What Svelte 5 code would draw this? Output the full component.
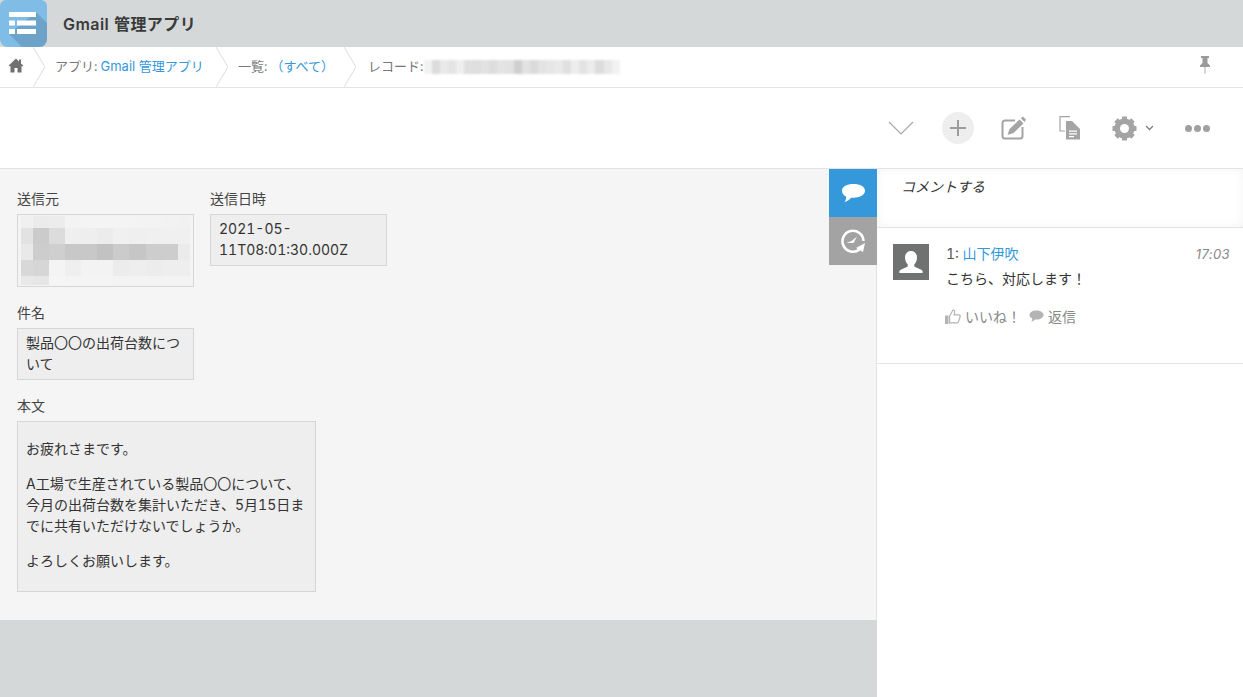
<script lang="ts">
  // pixelated (redacted) areas from the record
  const senderColumns = '12px 16px 16px 16px 16px 16px 16px 17px 16px 16px 12px';
  const senderMosaic = [
    ['f0f0f0', 'ebebeb', 'ececec', 'f3f3f3', 'f4f4f4', 'f4f4f4', 'f4f4f4', 'f3f3f3', 'f3f3f3', 'f2f2f2', 'f1f1f1'],
    ['e2e2e2', 'cbcbcb', 'dcdcdc', 'efefef', 'eeeeee', 'ececec', 'f0f0f0', 'efefef', 'f0f0f0', 'f0f0f0', 'f0f0f0'],
    ['e9e9e9', 'cdcdcd', 'cfcfcf', 'c8c8c8', 'c8c8c8', 'c2c2c2', 'cbcbcb', 'c6c6c6', 'cdcdcd', 'cdcdcd', 'ebebeb'],
    ['d8d8d8', 'd6d6d6', 'f4f4f4', 'efefef', 'f3f3f3', 'f3f3f3', 'ececec', 'eeeeee', 'ececec', 'eeeeee', 'eeeeee'],
    ['e8e8e8', 'e6e6e6', 'f5f5f5', 'f4f4f4', 'f4f4f4', 'f4f4f4', 'f3f3f3', 'f3f3f3', 'f3f3f3', 'f3f3f3', 'f3f3f3']
  ];
  const recordMosaic = [
    'f2f2f2', 'dcdcdc', 'e9e9e9', 'e4e4e4', 'efefef', 'dfdfdf', 'dedede', 'e2e2e2', 'dddddd', 'e4e4e4',
    'e2e2e2', 'cfcfcf', 'e2e2e2', 'dadada', 'e3e3e3', 'e6e6e6', 'e9e9e9', 'e0e0e0', 'ededed', 'e3e3e3',
    'ececec', 'dcdcdc', 'e8e8e8', 'f2f2f2'
  ];

  const gearTeeth = [0, 45, 90, 135];

  const bodyParagraphs = [
    'お疲れさまです。',
    'A工場で生産されている製品〇〇について、今月の出荷台数を集計いただき、5月15日までに共有いただけないでしょうか。',
    'よろしくお願いします。'
  ];
</script>

<div class="page">
  <header class="app-header">
    <div class="app-icon">
      <svg width="47" height="47" viewBox="0 0 47 47">
        <path d="M36 12 47 23V47H22L9 34z" fill="#6ea3c9" />
        <path fill="#fff" d="M9 12h27v5H9zM9 20.500h6v5H9zM17 20.500h19v5H17zM9 29h6v5H9zM17 29h19v5H17z" />
      </svg>
    </div>
    <h1>Gmail 管理アプリ</h1>
  </header>

  <nav class="breadcrumb">
    <span class="crumb home">
      <svg width="16" height="15" viewBox="0 0 16 15">
        <path fill="#707070" d="M8 .5 .8 7.500 1.800 8.500 2.500 7.900V14.500H6.500V10H9.500V14.500H13.500V7.900L14.200 8.500 15.200 7.500 13 5.400V1.500H11V3.500z" />
      </svg>
    </span>
    <span class="crumb app"><span>アプリ:</span><a href="#top">Gmail 管理アプリ</a></span>
    <span class="crumb list"><span>一覧:</span><a href="#top">（すべて）</a></span>
    <span class="crumb record">
      <span>レコード:</span>
      <span class="record-mosaic">
        {#each recordMosaic as color}
          <i style="background:#{color}"></i>
        {/each}
      </span>
    </span>
    <svg class="pin" width="12" height="18" viewBox="0 0 12 18">
      <path fill="#9a9a9a" d="M2 0h8v2H8.500v5L11 9.500V11H1V9.500L3.500 7V2H2z" />
      <path fill="#c4c4c4" d="M5.300 11h1.400v6.500H5.300z" />
    </svg>
  </nav>

  <div class="toolbar">
    <svg class="tool chevron" width="26" height="14" viewBox="0 0 26 14">
      <path d="M1 1l12 12L25 1" fill="none" stroke="#a8a8a8" stroke-width="1.200" />
    </svg>
    <span class="add">
      <svg width="18" height="18" viewBox="0 0 18 18">
        <path d="M9 1v16M1 9h16" stroke="#9c9c9c" stroke-width="2" fill="none" />
      </svg>
    </span>
    <svg class="tool edit" width="25" height="24" viewBox="0 0 25 24">
      <path d="M14 4.500H4A2.500 2.500 0 0 0 1.500 7V20A2.500 2.500 0 0 0 4 22.500h15a2.500 2.500 0 0 0 2.500-2.500V11" fill="none" stroke="#a4a4a4" stroke-width="2" />
      <path fill="#a4a4a4" d="M18.500 3.500 22.500 7.500 12.500 17 6.500 19 8.500 13zM19.800 2.200 21.800.4 25 3.600 23.600 6z" />
    </svg>
    <svg class="tool copy" width="22" height="24" viewBox="0 0 22 24">
      <path d="M11 .7H1V15h5" fill="none" stroke="#a4a4a4" stroke-width="1.200" />
      <path fill="#a4a4a4" d="M7 5h6l8 8V23.500H7z" />
      <path fill="#fff" d="M10 14.500h8v1.300h-8zM10 17.300h8v1.300h-8zM10 20h5v1.300h-5z" />
    </svg>
    <span class="settings">
      <svg width="25" height="25" viewBox="0 0 25 25">
        <circle cx="12.500" cy="12.500" r="7.300" fill="none" stroke="#a4a4a4" stroke-width="5.600" />
        {#each gearTeeth as angle}
          <rect x="10" y="0.500" width="5" height="24" rx="0.500" fill="#a4a4a4" transform="rotate({angle} 12.500 12.500)" />
        {/each}
        <circle cx="12.500" cy="12.500" r="4.500" fill="#fff" />
      </svg>
      <svg width="9" height="6" viewBox="0 0 9 6">
        <path d="M1 1l3.500 3.500L8 1" fill="none" stroke="#808080" stroke-width="1.300" />
      </svg>
    </span>
    <span class="more"><i></i><i></i><i></i></span>
  </div>

  <main class="content">
    <section class="record-pane">
      <div class="record-form">
        <div class="row">
          <div class="field sender">
            <span class="label">送信元</span>
            <div class="value mosaic" style="grid-template-columns:{senderColumns}">
              {#each senderMosaic as cells}
                {#each cells as color}
                  <i style="background:#{color}"></i>
                {/each}
              {/each}
            </div>
          </div>
          <div class="field">
            <span class="label">送信日時</span>
            <div class="value">2021-05-11T08:01:30.000Z</div>
          </div>
        </div>
        <div class="field">
          <span class="label">件名</span>
          <div class="value">製品〇〇の出荷台数について</div>
        </div>
        <div class="field wide">
          <span class="label">本文</span>
          <div class="value body">
            {#each bodyParagraphs as paragraph}
              <p>{paragraph}</p>
            {/each}
          </div>
        </div>
      </div>

      <div class="side-tabs">
        <span class="tab comment">
          <svg width="25" height="20" viewBox="0 0 25 20">
            <path fill="#fff" d="M12.500 1C19 1 24 3.700 24 7.800c0 4-5 7-11.500 7-.8 0-1.600 0-2.400-.1C8.700 16.500 6.800 18 3.500 19c1-1.400 1.700-3 1.700-5.200C2.500 12.500 1 10.300 1 7.800 1 3.700 6 1 12.500 1z" />
          </svg>
        </span>
        <span class="tab history">
          <svg width="26" height="26" viewBox="0 0 26 26">
            <path d="M19.500 21.500A10.500 10.500 0 1 1 23.500 13" fill="none" stroke="#fff" stroke-width="2.600" />
            <path d="M6.500 15 12 12.800 17 8.500 13.500 15z" fill="#fff" />
            <path d="M25 15 23 24 16 20z" fill="#fff" />
          </svg>
        </span>
      </div>
    </section>

    <aside class="comments">
      <div class="comment-box">コメントする</div>
      <article class="comment-item">
        <div class="avatar">
          <svg width="36" height="36" viewBox="0 0 36 36">
            <path fill="#fff" d="M18 7c3.800 0 6 2.800 6 6.500 0 2.800-1 5.200-2.700 6.800v2.200c2.200 1.500 6.200 2.500 8.300 4.200V29H6.400v-2.300c2.100-1.700 6.100-2.700 8.300-4.200v-2.200C13 18.700 12 16.300 12 13.500 12 9.800 14.200 7 18 7z" />
          </svg>
        </div>
        <div class="comment-main">
          <div class="comment-head">
            <span>1: <a href="#top">山下伊吹</a></span>
            <time>17:03</time>
          </div>
          <p>こちら、対応します！</p>
          <div class="comment-actions">
            <span class="action">
              <svg width="16" height="15" viewBox="0 0 16 15">
                <path fill="#b4b4b4" d="M0 6.500h3.500V15H0z" />
                <path fill="#fff" stroke="#b4b4b4" stroke-width="1.200" d="M4.600 13.800V6.800L8 1c1.600 0 2 1.200 1.600 2.800L9.200 5.800h4.700c1 0 1.500 1 1.200 1.900l-1.600 5.200c-.2.600-.7.900-1.300.9z" />
              </svg>
              いいね！
            </span>
            <span class="action">
              <svg width="15" height="12" viewBox="0 0 15 12">
                <path fill="#b4b4b4" d="M7.500.5c4 0 7 1.900 7 4.500s-3 4.500-7 4.500c-.5 0-1 0-1.400-.1-.9 1-2.100 1.700-3.800 2 .6-.8 1-1.700 1-2.900C1.700 7.800.5 6.500.5 5 .5 2.400 3.500.5 7.500.5z" />
              </svg>
              返信
            </span>
          </div>
        </div>
      </article>
    </aside>
  </main>
</div>

<style>
  :global(body) {
    margin: 0;
    background: #d4d8d9;
    font-family: Inter, 'Noto Sans CJK JP', sans-serif;
    font-variant-numeric: tabular-nums;
    color: #333;
  }

  .page {
    width: 1243px;
    height: 697px;
    overflow: hidden;
    display: flex;
    flex-direction: column;
  }

  a {
    color: #3498db;
    text-decoration: none;
  }

  .app-header {
    flex: none;
    height: 47px;
    display: flex;
    align-items: center;
    gap: 16px;
    background: #d4d8d9;
  }

  .app-icon {
    width: 47px;
    height: 47px;
    background: #7fbde6;
    border-radius: 6px 6px 8px 8px;
    overflow: hidden;
  }

  .app-icon svg {
    display: block;
  }

  h1 {
    margin: 0 0 1px;
    font-size: 16px;
    font-weight: 600;
    letter-spacing: 0.45px;
    color: #3a3a3a;
  }

  .breadcrumb {
    flex: none;
    height: 40px;
    display: flex;
    align-items: center;
    background: #fff;
    border-bottom: 1px solid #e3e3e3;
    font-size: 13px;
    color: #777;
  }

  .crumb {
    position: relative;
    height: 100%;
    box-sizing: border-box;
    padding-bottom: 3px;
    display: flex;
    align-items: center;
    white-space: pre;
  }

  .crumb a {
    margin-left: 3px;
  }

  .crumb:not(.record)::after {
    content: '';
    position: absolute;
    right: 0;
    top: 0;
    width: 12px;
    height: 100%;
    background:
      linear-gradient(to bottom right, transparent calc(50% - 1px), #e0e0e0 50%, transparent calc(50% + 1px)) bottom / 100% 50% no-repeat,
      linear-gradient(to top right, transparent calc(50% - 1px), #e0e0e0 50%, transparent calc(50% + 1px)) top / 100% 50% no-repeat;
  }

  .home {
    width: 45px;
    padding-left: 8px;
  }

  .app {
    width: 183px;
    padding-left: 10px;
  }

  .list {
    width: 128px;
    padding-left: 10px;
  }

  .record {
    padding-left: 12px;
  }

  .record-mosaic {
    display: flex;
    height: 14px;
    margin: 3px 0 0 0;
    filter: blur(1px);
  }

  .record-mosaic i {
    width: 8.200px;
    height: 100%;
  }

  .pin {
    margin-left: auto;
    margin-right: 32px;
    margin-bottom: 4px;
  }

  .toolbar {
    flex: none;
    height: 80px;
    display: flex;
    align-items: center;
    justify-content: flex-end;
    padding: 0 33px 0 0;
    background: #fff;
    border-bottom: 1px solid #e3e3e3;
  }

  .add {
    width: 32px;
    height: 32px;
    margin-left: 28px;
    border-radius: 50%;
    background: #eee;
    display: flex;
    align-items: center;
    justify-content: center;
  }

  .edit {
    margin-left: 27px;
  }

  .copy {
    margin-left: 33px;
  }

  .settings {
    margin-left: 31px;
    display: flex;
    align-items: center;
    gap: 8px;
  }

  .more {
    margin-left: 31px;
    display: flex;
    gap: 2px;
  }

  .more i {
    width: 7px;
    height: 7px;
    border-radius: 50%;
    background: #a0a0a0;
  }

  .content {
    flex: 1;
    min-height: 0;
    display: flex;
  }

  .record-pane {
    position: relative;
    flex: none;
    width: 877px;
    box-sizing: border-box;
    align-self: flex-start;
    height: 451px;
    background: #f5f5f5;
    border-right: 1px solid #e3e3e3;
  }

  .record-form {
    padding: 21px 0 0 17px;
    display: flex;
    flex-direction: column;
    gap: 17px;
    font-size: 14px;
  }

  .row {
    display: flex;
    gap: 16px;
    align-items: flex-start;
  }

  .field {
    width: 177px;
  }

  .field.wide {
    width: 299px;
  }

  .label {
    display: block;
    height: 24px;
    line-height: 18px;
    font-size: 14px;
    color: #444;
  }

  .value {
    box-sizing: border-box;
    padding: 3px 8px 5px 8px;
    border: 1px solid #d6d6d6;
    background: #eee;
    line-height: 21px;
    color: #333;
    font-size: 14px;
    overflow-wrap: anywhere;
  }

  .value.mosaic {
    height: 73px;
    padding: 1px 3px;
    display: grid;
    grid-template-rows: 12px 16px 16px 16px 9px;
    background: #f4f4f4;
  }

  .value.body {
    padding: 6px 8px 20px;
  }

  .body p {
    margin: 10px 0 0;
  }

  .body p + p {
    margin-top: 14px;
  }

  .side-tabs {
    position: absolute;
    top: 0;
    right: -1px;
    width: 48px;
  }

  .tab {
    display: flex;
    align-items: center;
    justify-content: center;
    height: 48px;
  }

  .tab.comment {
    background: #3498db;
  }

  .tab.history {
    background: #a3a3a3;
  }

  .comments {
    flex: 1;
    background: #fff;
    font-size: 14px;
  }

  .comment-box {
    height: 59px;
    box-sizing: border-box;
    padding: 7px 0 0 24px;
    font-size: 14px;
    font-style: italic;
    color: #333;
    border-bottom: 1px solid #e3e3e3;
    box-shadow: inset 0 0 10px #f3f3f3;
  }

  .comment-item {
    display: flex;
    gap: 17px;
    height: 135px;
    padding: 0 13px 0 16px;
    border-bottom: 1px solid #e3e3e3;
  }

  .avatar {
    flex: none;
    width: 36px;
    height: 36px;
    margin-top: 16px;
    background: #707271;
  }

  .avatar svg {
    display: block;
  }

  .comment-main {
    flex: 1;
    padding-top: 16px;
  }

  .comment-head {
    display: flex;
    justify-content: space-between;
    line-height: 20px;
    font-size: 14px;
    color: #555;
  }

  time {
    font-style: italic;
    font-size: 13px;
    font-variant-numeric: normal;
    letter-spacing: 0.4px;
    color: #888;
  }

  .comment-main p {
    margin: 5px 0 0;
    line-height: 20px;
    font-size: 14px;
    color: #333;
  }

  .comment-actions {
    display: flex;
    gap: 8px;
    margin-top: 17px;
    margin-left: -1px;
    font-size: 14px;
    color: #888;
  }

  .action {
    display: flex;
    align-items: center;
    gap: 4px;
  }
</style>
